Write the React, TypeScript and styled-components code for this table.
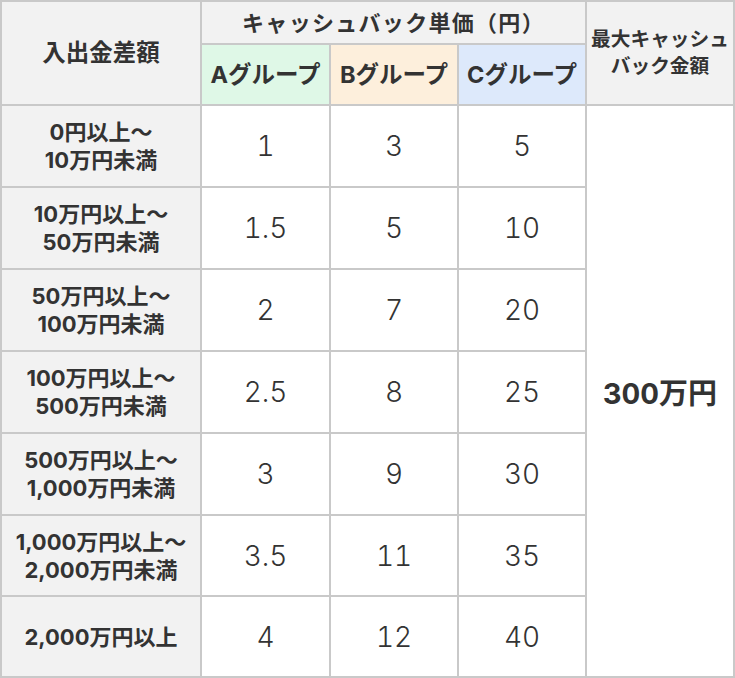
import React from "react";
import styled, { createGlobalStyle } from "styled-components";

const Global = createGlobalStyle`
  html, body { margin: 0; padding: 0; background: #ffffff; }
  body { font-family: "Inter", "Noto Sans CJK JP", sans-serif; color: #333333; }
`;

const Grid = styled.div`
  width: 735px;
  height: 678px;
  box-sizing: border-box;
  display: grid;
  grid-template-columns: 198px 127px 126px 126px 146px;
  grid-template-rows: 41px 59px 80px 80px 80px 80px 80px 79px 79px;
  gap: 2px;
  padding: 2px;
  background: #c9c9c9;
`;

const Cell = styled.div<{ $bg?: string; $col?: string; $row?: string }>`
  display: flex;
  align-items: center;
  justify-content: center;
  text-align: center;
  background: ${(p) => p.$bg || "#ffffff"};
  grid-column: ${(p) => p.$col || "auto"};
  grid-row: ${(p) => p.$row || "auto"};
`;

const HeadText = styled.span<{ $size?: number; $spacing?: number; $lh?: number }>`
  font-family: "Inter", "Noto Sans CJK JP", sans-serif;
  font-size: ${(p) => p.$size || 23}px;
  letter-spacing: ${(p) => p.$spacing || 0}px;
  font-weight: 700;
  line-height: ${(p) => p.$lh || 30}px;
  color: #333333;
`;

const LabelText = styled.span`
  font-size: 22px;
  font-weight: 700;
  line-height: 28px;
  color: #333333;
`;

const ValueText = styled.span<{ $bold?: boolean }>`
  font-family: "Inter", "Noto Sans CJK JP", sans-serif;
  font-variant-numeric: tabular-nums;
  font-size: ${(p) => (p.$bold ? 29 : 28)}px;
  font-weight: ${(p) => (p.$bold ? 700 : 300)};
  color: #333333;
`;

const HEAD = "#f2f2f2";

const rows: { label: React.ReactNode; a: string; b: string; c: string }[] = [
  { label: <>0円以上～<br />10万円未満</>, a: "1", b: "3", c: "5" },
  { label: <>10万円以上～<br />50万円未満</>, a: "1.5", b: "5", c: "10" },
  { label: <>50万円以上～<br />100万円未満</>, a: "2", b: "7", c: "20" },
  { label: <>100万円以上～<br />500万円未満</>, a: "2.5", b: "8", c: "25" },
  { label: <>500万円以上～<br />1,000万円未満</>, a: "3", b: "9", c: "30" },
  { label: <>1,000万円以上～<br />2,000万円未満</>, a: "3.5", b: "11", c: "35" },
  { label: <>2,000万円以上</>, a: "4", b: "12", c: "40" },
];

export default function App() {
  return (
    <>
      <Global />
      <Grid>
        <Cell $bg={HEAD} $col="1" $row="1 / span 2">
          <HeadText $size={23.5}>入出金差額</HeadText>
        </Cell>
        <Cell $bg={HEAD} $col="2 / span 3" $row="1">
          <HeadText $size={22} $spacing={1.3}>キャッシュバック単価（円）</HeadText>
        </Cell>
        <Cell $bg={HEAD} $col="5" $row="1 / span 2">
          <HeadText $size={19.7} $lh={27}>最大キャッシュ<br />バック金額</HeadText>
        </Cell>
        <Cell $bg="#dff8e7" $col="2" $row="2">
          <HeadText $size={23.5}>Aグループ</HeadText>
        </Cell>
        <Cell $bg="#fdefdc" $col="3" $row="2">
          <HeadText $size={23.5}>Bグループ</HeadText>
        </Cell>
        <Cell $bg="#dde9fb" $col="4" $row="2">
          <HeadText $size={23.5}>Cグループ</HeadText>
        </Cell>
        {rows.map((r, i) => (
          <React.Fragment key={i}>
            <Cell $bg={HEAD} $col="1" $row={String(i + 3)}>
              <LabelText>{r.label}</LabelText>
            </Cell>
            <Cell $col="2" $row={String(i + 3)}>
              <ValueText>{r.a}</ValueText>
            </Cell>
            <Cell $col="3" $row={String(i + 3)}>
              <ValueText>{r.b}</ValueText>
            </Cell>
            <Cell $col="4" $row={String(i + 3)}>
              <ValueText>{r.c}</ValueText>
            </Cell>
          </React.Fragment>
        ))}
        <Cell $col="5" $row="3 / span 7">
          <ValueText $bold>300万円</ValueText>
        </Cell>
      </Grid>
    </>
  );
}
